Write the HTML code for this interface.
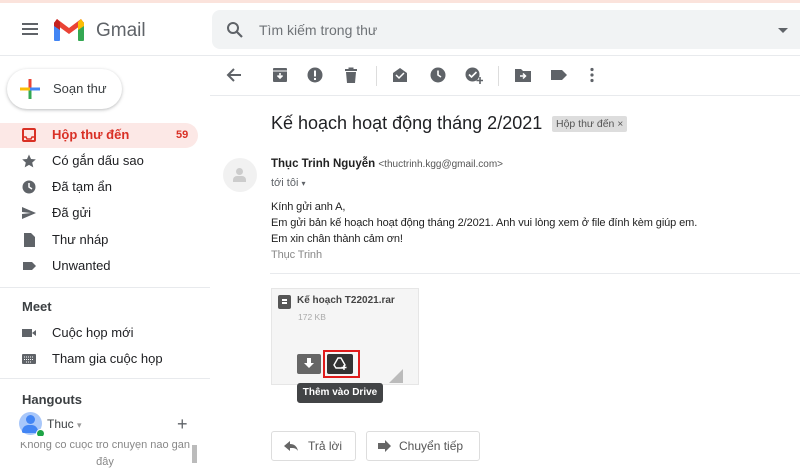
<!DOCTYPE html>
<html><head><meta charset="utf-8"><style>
*{margin:0;padding:0;box-sizing:border-box}
body{width:800px;height:463px;overflow:hidden;background:#fff;font-family:"Liberation Sans",Arial,sans-serif;color:#202124;position:relative}
.a{position:absolute}
.nav{position:absolute;left:0;width:198px;height:24px;font-size:13px;color:#202124;line-height:24px}
.nav .t{position:absolute;left:52px}
.nav svg{position:absolute;left:22px;top:5px}
.tb{position:absolute;top:67px}
</style></head><body>
<div class="a" style="left:0;top:0;width:800px;height:3px;background:#fbe3dc"></div>
<div class="a" style="left:22px;top:23px;width:16px;height:2px;background:#5f6368;box-shadow:0 5px 0 #5f6368,0 10px 0 #5f6368"></div>
<svg class="a" style="left:54px;top:18px" width="30" height="23" viewBox="0 0 30 23"><rect x="0" y="4" width="6" height="19" rx="1" fill="#4285f4"/><rect x="24" y="4" width="6" height="19" rx="1" fill="#34a853"/><path d="M0 5 L15 16 L30 5 L27 1 L15 10 L3 1Z" fill="#ea4335"/><path d="M24 4 L27 1 L30 5 L30 8 L24 12Z" fill="#fbbc04"/><path d="M0 5L3 1L6 4V12L0 8Z" fill="#c5221f"/></svg>
<div class="a" style="left:96px;top:20px;font-size:19px;color:#5f6368">Gmail</div>
<div class="a" style="left:212px;top:10px;width:588px;height:39px;background:#f1f3f4;border-radius:8px 0 0 8px"></div>
<svg class="a" style="left:226px;top:21px" width="18" height="18" viewBox="0 0 18 18"><circle cx="7" cy="7" r="5" fill="none" stroke="#5f6368" stroke-width="2"/><path d="M11 11l5 5" stroke="#5f6368" stroke-width="2.2"/></svg>
<div class="a" style="left:259px;top:22px;font-size:14px;color:#6f7377">Tìm kiếm trong thư</div>
<div class="a" style="left:778px;top:28px;border:5px solid transparent;border-top-color:#5f6368;border-bottom:0"></div>
<div class="a" style="left:0;top:55px;width:800px;height:1px;background:#e8eaed"></div>
<div class="a" style="left:7px;top:69px;width:115px;height:40px;border-radius:20px;background:#fff;box-shadow:0 1px 3px rgba(60,64,67,.35)"></div>
<svg class="a" style="left:20px;top:79px" width="20" height="20" viewBox="0 0 20 20"><rect x="8.5" y="0" width="3" height="10" fill="#ea4335"/><rect x="8.5" y="10" width="3" height="10" fill="#34a853"/><rect x="0" y="8.5" width="10" height="3" fill="#fbbc04"/><rect x="10" y="8.5" width="10" height="3" fill="#4285f4"/></svg>
<div class="a" style="left:53px;top:81px;font-size:13px;color:#3c4043">Soạn thư</div>
<div class="a" style="left:0;top:123px;width:198px;height:25px;background:#fce8e6;border-radius:0 13px 13px 0"></div>
<div class="nav" style="top:123px;color:#d93025;font-weight:bold"><svg width="14" height="14"><rect x="1" y="1" width="12" height="12" rx="1" fill="none" stroke="#d93025" stroke-width="2"/><path d="M1 9h3l1 2h4l1-2h3" fill="none" stroke="#d93025" stroke-width="1.5"/></svg><span class="t">Hộp thư đến</span><span style="position:absolute;left:176px;font-size:11px">59</span></div>
<div class="nav" style="top:149px"><svg width="14" height="14"><path d="M7 0.5l2 4.5 4.8.4-3.6 3.2 1.1 4.8L7 10.9 2.7 13.4l1.1-4.8L.2 5.4 5 5z" fill="#5f6368"/></svg><span class="t">Có gắn dấu sao</span></div>
<div class="nav" style="top:175px"><svg width="14" height="14"><circle cx="7" cy="7" r="6.5" fill="#5f6368"/><path d="M7 3v4l3 2" stroke="#fff" stroke-width="1.5" fill="none"/></svg><span class="t">Đã tạm ẩn</span></div>
<div class="nav" style="top:201px"><svg width="14" height="14"><path d="M0 1l14 6-14 6V8l9-1-9-1z" fill="#5f6368"/></svg><span class="t">Đã gửi</span></div>
<div class="nav" style="top:228px"><svg width="14" height="14"><path d="M2 0h7l4 4v10H2z" fill="#5f6368"/></svg><span class="t">Thư nháp</span></div>
<div class="nav" style="top:254px"><svg width="14" height="14"><path d="M1 3h9l4 4-4 4H1z" fill="#5f6368"/></svg><span class="t">Unwanted</span></div>
<div class="a" style="left:0;top:287px;width:210px;height:1px;background:#e8eaed"></div>
<div class="a" style="left:22px;top:299px;font-size:13px;font-weight:bold;color:#3c4043">Meet</div>
<div class="nav" style="top:321px"><svg width="14" height="14"><rect x="0" y="3" width="10" height="8" fill="#5f6368"/><path d="M10 7l4-3v6z" fill="#5f6368"/></svg><span class="t">Cuộc họp mới</span></div>
<div class="nav" style="top:347px"><svg width="14" height="14"><rect x="0" y="2" width="14" height="10" rx="1" fill="#5f6368"/><path d="M2 5h10M2 7.5h10M4 10h6" stroke="#fff" stroke-width="1" stroke-dasharray="1 1"/></svg><span class="t">Tham gia cuộc họp</span></div>
<div class="a" style="left:0;top:378px;width:210px;height:1px;background:#e8eaed"></div>
<div class="a" style="left:22px;top:392px;font-size:13px;font-weight:bold;color:#3c4043">Hangouts</div>
<div class="a" style="left:19px;top:412px;width:23px;height:23px;border-radius:50%;background:#a8c7fa"></div>
<div class="a" style="left:26px;top:415px;width:9px;height:9px;border-radius:50%;background:#4285f4"></div>
<div class="a" style="left:22px;top:425px;width:16px;height:8px;border-radius:8px 8px 2px 2px;background:#4285f4"></div>
<div class="a" style="left:36px;top:429px;width:9px;height:9px;border-radius:50%;background:#1ea446;border:1px solid #fff"></div>
<div class="a" style="left:47px;top:417px;font-size:12px;color:#3c4043">Thuc <span style="color:#999;font-size:9px">▾</span></div>
<div class="a" style="left:177px;top:414px;font-size:18px;color:#5f6368">+</div>
<div class="a" style="left:0;top:436px;width:210px;height:6px;background:#fff;z-index:2"></div>
<div class="a" style="left:20px;top:437px;font-size:11px;color:#888;width:170px;text-align:center;line-height:17px">Không có cuộc trò chuyện nào gần đây</div>
<div class="a" style="left:192px;top:445px;width:5px;height:18px;background:#bbb"></div>
<svg class="tb" style="left:226px" width="16" height="16" viewBox="0 0 16 16"><path d="M15 8H2M8 2L2 8l6 6" fill="none" stroke="#5f6368" stroke-width="2"/></svg>
<svg class="tb" style="left:272px" width="16" height="16"><rect x="1" y="1" width="14" height="14" rx="1" fill="#5f6368"/><path d="M8 6v5M5.5 8.5L8 11l2.5-2.5" stroke="#fff" stroke-width="1.6" fill="none"/><path d="M1 4h14" stroke="#fff"/></svg>
<svg class="tb" style="left:307px" width="16" height="16"><circle cx="8" cy="8" r="7.5" fill="#5f6368"/><rect x="7" y="3.5" width="2" height="6" fill="#fff"/><rect x="7" y="11" width="2" height="2" fill="#fff"/></svg>
<svg class="tb" style="left:343px" width="16" height="16"><path d="M2 2h12v2H2zM5.5 0.5h5v2h-5zM3 5h10l-1 11H4z" fill="#5f6368"/></svg>
<div class="a" style="left:376px;top:66px;width:1px;height:20px;background:#ddd"></div>
<svg class="tb" style="left:392px" width="16" height="16"><path d="M1 6l7-5 7 5v9H1z" fill="#5f6368"/><path d="M4 8l3 3 5-5" stroke="#fff" stroke-width="1.5" fill="none"/></svg>
<svg class="tb" style="left:430px" width="16" height="16"><circle cx="8" cy="8" r="7.5" fill="#5f6368"/><path d="M8 3.5V8l3 2" stroke="#fff" stroke-width="1.6" fill="none"/></svg>
<svg class="tb" style="left:465px" width="18" height="18"><circle cx="7.5" cy="7.5" r="7" fill="#5f6368"/><path d="M4 7.5l2.5 2.5 5-5" stroke="#fff" stroke-width="1.6" fill="none"/><path d="M15 10v7M11.5 13.5h7" stroke="#5f6368" stroke-width="1.6"/></svg>
<div class="a" style="left:498px;top:66px;width:1px;height:20px;background:#ddd"></div>
<svg class="tb" style="left:515px" width="16" height="16"><path d="M0 2h6l2 2h8v11H0z" fill="#5f6368"/><path d="M5 9h5M8 6.5L10.5 9 8 11.5" stroke="#fff" stroke-width="1.5" fill="none"/></svg>
<svg class="tb" style="left:551px" width="16" height="16"><path d="M0 3h11l5 5-5 5H0z" fill="#5f6368"/></svg>
<svg class="tb" style="left:589px" width="6" height="16"><circle cx="3" cy="2.5" r="1.6" fill="#5f6368"/><circle cx="3" cy="8" r="1.6" fill="#5f6368"/><circle cx="3" cy="13.5" r="1.6" fill="#5f6368"/></svg>
<div class="a" style="left:210px;top:95px;width:590px;height:1px;background:#e8eaed"></div>
<div class="a" style="left:271px;top:113px;font-size:18px;color:#202124">Kế hoạch hoạt động tháng 2/2021</div>
<div class="a" style="left:552px;top:116px;height:16px;background:#ddd;color:#555;font-size:10.5px;line-height:16px;padding:0 4px;border-radius:2px">Hộp thư đến <span style="font-size:10px">×</span></div>
<div class="a" style="left:223px;top:158px;width:34px;height:34px;border-radius:50%;background:#f1f1f1"></div>
<div class="a" style="left:236px;top:168px;width:7px;height:7px;border-radius:50%;background:#ccc"></div>
<div class="a" style="left:233px;top:176px;width:13px;height:6px;border-radius:4px 4px 0 0;background:#ccc"></div>
<div class="a" style="left:271px;top:158px;font-size:11.5px"><b style="color:#222">Thục Trinh Nguyễn</b> <span style="font-size:10px;color:#555">&lt;thuctrinh.kgg@gmail.com&gt;</span></div>
<div class="a" style="left:271px;top:177px;font-size:11px;color:#5f6368">tới tôi <span style="font-size:8px">▾</span></div>
<div class="a" style="left:271px;top:199px;font-size:11px;color:#222;line-height:16px;letter-spacing:-0.1px">Kính gửi anh A,<br>Em gửi bản kế hoạch hoạt động tháng 2/2021. Anh vui lòng xem ở file đính kèm giúp em.<br>Em xin chân thành cảm ơn!<br><span style="color:#888">Thục Trinh</span></div>
<div class="a" style="left:270px;top:273px;width:530px;height:1px;background:#e8eaed"></div>
<div class="a" style="left:271px;top:288px;width:148px;height:97px;background:#f5f5f5;border:1px solid #e6e6e6"></div>
<div class="a" style="left:389px;top:369px;width:0;height:0;border-right:14px solid #bbb;border-top:14px solid transparent"></div>
<div class="a" style="left:278px;top:295px;width:13px;height:14px;background:#555;border-radius:2px"></div>
<div class="a" style="left:282px;top:299px;width:5px;height:1.5px;background:#fff;box-shadow:0 3px 0 #fff"></div>
<div class="a" style="left:297px;top:295px;font-size:10px;font-weight:bold;color:#444">Kế hoạch T22021.rar</div>
<div class="a" style="left:298px;top:312px;font-size:8.5px;color:#aaa">172 KB</div>
<div class="a" style="left:297px;top:354px;width:24px;height:20px;background:#666;border-radius:2px"></div>
<svg class="a" style="left:303px;top:357px" width="12" height="13"><path d="M4 1h4v5h3L6 11 1 6h3z" fill="#fff"/></svg>
<div class="a" style="left:323px;top:350px;width:37px;height:28px;border:2px solid #e01b1b"></div>
<div class="a" style="left:327px;top:354px;width:26px;height:20px;background:#333;border-radius:2px"></div>
<svg class="a" style="left:332px;top:356px" width="16" height="16" viewBox="0 0 16 16"><path d="M6 2h3l4 7-2 3H4L2 9z" fill="none" stroke="#fff" stroke-width="1.4"/><path d="M12 9v5M9.5 11.5h5" stroke="#fff" stroke-width="1.4"/></svg>
<div class="a" style="left:297px;top:383px;width:86px;height:20px;background:#424446;border-radius:3px;color:#fff;font-size:10px;font-weight:bold;line-height:20px;text-align:center">Thêm vào Drive</div>
<div class="a" style="left:271px;top:431px;width:85px;height:30px;border:1px solid #ddd;border-radius:3px;font-size:12px;color:#555;line-height:28px;padding-left:36px">Trả lời</div>
<svg class="a" style="left:284px;top:440px" width="14" height="12"><path d="M0 6l6-5v3c4 0 7 2 8 7-2-3-4-3-8-3v3z" fill="#666"/></svg>
<div class="a" style="left:366px;top:431px;width:114px;height:30px;border:1px solid #ddd;border-radius:3px;font-size:12px;color:#555;line-height:28px;padding-left:32px">Chuyển tiếp</div>
<svg class="a" style="left:378px;top:440px" width="13" height="12"><path d="M0 3h7V0l6 6-6 6V9H0z" fill="#666"/></svg>
</body></html>
